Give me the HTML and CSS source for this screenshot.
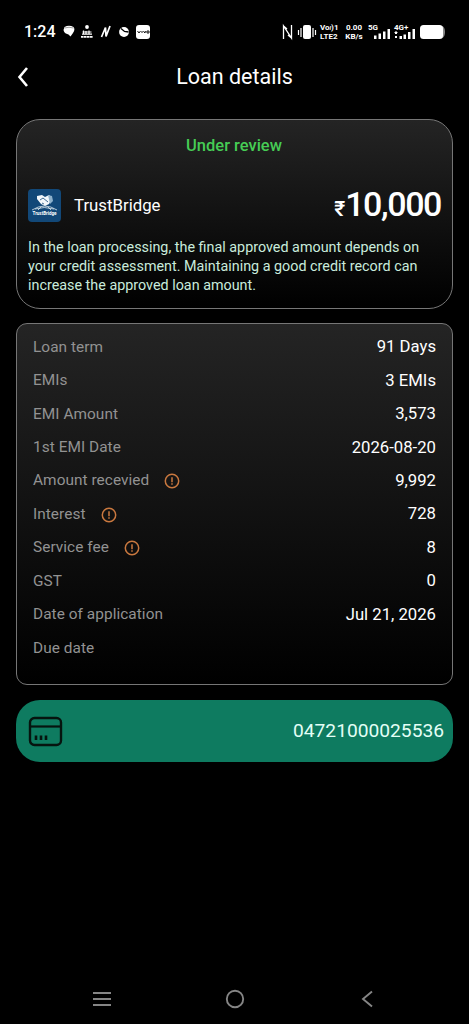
FILE: index.html
```html
<!DOCTYPE html>
<html lang="en">
<head>
<meta charset="utf-8">
<title>Loan details</title>
<link rel="stylesheet" href="styles.css">
</head>
<body>
<div class="screen">
  <div class="status">
    <span class="clock">1:24</span>
    <svg class="notices" width="96" height="18" viewBox="0 0 96 18" fill="#fff">
      <path d="M2.500 4Q7 1.500 11.500 4Q13.500 6.500 11 10L8.500 13.500L6.500 11.500Q2 10.500 1.500 7Z"/><path d="M2.500 5Q7 3.500 11.500 5" stroke="#777" fill="none" stroke-width=".7"/>
      <circle cx="25" cy="4" r="1.900"/><path d="M20.500 9h9M21.500 7.500v4M24 8v3.500M27 7.500v4M20 11.200h10" stroke="#fff" stroke-width="1.200"/><path d="M19 13.800h12" stroke="#fff" stroke-width="1.800" stroke-dasharray="2.500 .4"/>
      <path d="M39.500 14L43.500 4.500L44 13.500L48 3" fill="none" stroke="#fff" stroke-width="1.700"/>
      <circle cx="62" cy="9" r="4.900"/><path d="M59 5.500L62.500 8.500L66.500 9" fill="none" stroke="#000" stroke-width="1.300"/>
      <rect x="74" y="2" width="14" height="14" rx="3"/><path d="M75.500 8l1.500 2l1.500-2M80 8v2M81.500 8l1.300 2l1.200-2M85 8h2v2h-2z" fill="none" stroke="#000" stroke-width=".9"/>
    </svg>
    <svg class="radio" width="37" height="18" viewBox="0 0 37 18" fill="none" stroke="#fff">
      <path d="M1.500 16V3L9.500 15V2M1.500 3L5 6M9.500 15L6 12" stroke-width="1.300"/>
      <rect x="21" y="2" width="8" height="14" rx="2" fill="#fff" stroke="none"/><path d="M16.500 7v5M19 5v9M31 5v9M33.500 7v5" stroke-width="1.200"/>
    </svg>
    <span class="mini volte">Vo<i>l</i>)1<br>LTE2</span>
    <span class="mini speed">0.00<br>KB/s</span>
    <span class="mini net">5G<svg width="17" height="10" viewBox="0 0 17 10" fill="#fff"><path d="M0 6.500h2.500V10H0zM4.500 4.500h2.500V10h-2.500zM9 2.500h2.500V10H9zM13.500 0h2.500v10h-2.500z"/></svg></span>
    <span class="mini net wide">4G+<svg width="22" height="10" viewBox="0 0 22 10" fill="#fff"><path d="M0 4l2-2l2 2H3v1H1V4zM1 7h2v2H1zM5.500 7h2.500v3H5.500zM9.500 5.500H12V10H9.500zM14 3h2.500v7H14zM18.500 0H21v10h-2.500z"/></svg></span>
    <svg class="battery" width="26" height="16" viewBox="0 0 26 16"><path d="M22 2Q25 3 25 8T22 14Z" fill="#888"/><rect x="0" y="1" width="23" height="14" rx="3.500" fill="#fff"/></svg>
  </div>

  <header class="topbar">
    <svg class="back" width="12" height="22" viewBox="0 0 12 22"><path d="M10 2L2.500 11L10 20" fill="none" stroke="#fff" stroke-width="2.600"/></svg>
    <h1>Loan details</h1>
  </header>

  <main>
    <section class="card summary">
      <div class="state">Under review</div>
      <div class="lender">
        <svg width="33" height="33" viewBox="0 0 33 33">
          <rect width="33" height="33" rx="4" fill="#124878"/>
          <path d="M9 7l5-1l3 2l4-2l3 3l-3 6l-4 2l-4-2l-4-5z" fill="#f2f7fa"/><path d="M20 6l4 1l1 5l-3 3" fill="#8db1cb"/><path d="M12 11l3-2l5 4M14 14l2 1" stroke="#124878" stroke-width=".8" fill="none"/>
          <path d="M4 21Q16.500 13 29 21M7 20Q16 17 26 20M13 18L10 21M20 18L23 21" fill="none" stroke="#dce8ef" stroke-width=".8"/>
          <text class="logo-name" x="16.500" y="26" text-anchor="middle">TrustBridge</text>
        </svg>
        <span class="name">TrustBridge</span>
        <span class="amount"><small>₹</small>10,000</span>
      </div>
      <p>In the loan processing, the final approved amount depends on<br>your credit assessment. Maintaining a good credit record can<br>increase the approved loan amount.</p>
    </section>

    <section class="card details">
      <div class="row"><span>Loan term</span><b>91 Days</b></div>
      <div class="row"><span>EMIs</span><b>3 EMIs</b></div>
      <div class="row"><span>EMI Amount</span><b>3,573</b></div>
      <div class="row"><span>1st EMI Date</span><b>2026-08-20</b></div>
      <div class="row"><span>Amount recevied</span><svg class="info" viewBox="0 0 16 16"><circle cx="8" cy="8" r="6.700"/><path d="M8 4.200v5M8 10.300v1.500"/></svg><b>9,992</b></div>
      <div class="row"><span>Interest</span><svg class="info" viewBox="0 0 16 16"><circle cx="8" cy="8" r="6.700"/><path d="M8 4.200v5M8 10.300v1.500"/></svg><b>728</b></div>
      <div class="row"><span>Service fee</span><svg class="info" viewBox="0 0 16 16"><circle cx="8" cy="8" r="6.700"/><path d="M8 4.200v5M8 10.300v1.500"/></svg><b>8</b></div>
      <div class="row"><span>GST</span><b>0</b></div>
      <div class="row"><span>Date of application</span><b>Jul 21, 2026</b></div>
      <div class="row"><span>Due date</span></div>
    </section>

    <section class="account">
      <svg width="35" height="31" viewBox="0 0 35 31"><rect x="2" y="2" width="31" height="27" rx="4.500" fill="none" stroke="#06140f" stroke-width="2.400"/><path d="M2 10.500h31" stroke="#06140f" stroke-width="2.200"/><path d="M8 19.500v4.500M13 19.500v4.500M18 19.500v4.500" stroke="#06140f" stroke-width="2.600"/></svg>
      <span>04721000025536</span>
    </section>
  </main>

  <nav>
    <svg width="20" height="20" viewBox="0 0 20 20"><path d="M1 4h18M1 10h18M1 16h18"/></svg>
    <svg width="20" height="20" viewBox="0 0 20 20"><circle cx="10" cy="10" r="8.200"/></svg>
    <svg width="20" height="20" viewBox="0 0 20 20"><path d="M15 2.500L6 10L15 17.500"/></svg>
  </nav>
</div>
</body>
</html>
```
FILE: styles.css
```css
* { box-sizing: border-box; }
body { margin: 0; background: #000; color: #fff; font-family: Roboto, "Noto Sans", sans-serif; }
svg { display: block; flex: none; }
.screen { width: 469px; height: 1024px; display: flex; flex-direction: column; overflow: hidden; }

.status { height: 50px; padding: 23px 0 0 24px; display: flex; align-items: flex-start; }
.clock { width: 38px; font-size: 16px; font-weight: 500; line-height: 18px; letter-spacing: 0; white-space: nowrap; }
.notices { margin-right: 124px; }
.radio { margin-right: 1px; }
.mini { font-size: 8px; font-weight: 700; line-height: 9px; white-space: nowrap; }
.mini i { font-size: 6px; }
.volte { width: 23px; }
.speed { width: 22px; text-align: center; margin-right: 3px; }
.net { width: 26px; }
.net svg { margin: -3px 0 0 6px; }
.wide { width: 26px; }
.wide svg { margin-left: 0; }
.battery { margin-top: 1px; }

.topbar { height: 69px; padding: 14px 0 0 17px; display: flex; align-items: flex-start; }
.back { margin-top: 2px; }
h1 { flex: 1; margin: 0; padding-right: 29px; font-size: 21.500px; font-weight: 400; line-height: 25px; text-align: center; }

main { flex: 1; padding: 0 16px; display: flex; flex-direction: column; }
.card { border: 1px solid #767676; background: linear-gradient(#242424, #000); }
.summary { height: 190px; margin-bottom: 14px; border-radius: 24px; padding: 0 12px 0 11px; }
.state { margin-top: 16px; color: #46cc55; font-size: 16.500px; font-weight: 500; line-height: 20px; text-align: center; }
.lender { height: 40px; margin-top: 29px; display: flex; align-items: center; }
.logo-name { fill: #fff; font: 700 4.500px Roboto, sans-serif; }
.name { margin-left: 13px; font-size: 16.800px; }
.amount { margin: 2px -1px 0 auto; font-size: 34px; font-weight: 500; line-height: 40px; letter-spacing: -1.400px; }
.amount small { font-size: 21px; letter-spacing: 0; }
p { margin: 13px 0 0; color: #c9ebdc; font-size: 14.350px; line-height: 19px; white-space: nowrap; }

.details { height: 362px; margin-bottom: 15px; border-radius: 11px; padding: 6px 16px 0; }
.row { height: 33.450px; display: flex; align-items: center; }
.row span { color: #929292; font-size: 15.400px; letter-spacing: 0.050px; }
.row b { margin-left: auto; font-size: 16.700px; font-weight: 400; }
.info { width: 16px; height: 16px; margin: 2px 0 0 15px; fill: none; stroke: #c9783f; stroke-width: 1.500; }

.account { height: 62px; border-radius: 24px; padding: 0 9px 0 12px; display: flex; align-items: center; justify-content: space-between; background: #0e7b60; }
.account span { margin-top: -1px; font-size: 19.200px; color: #e3fff6; }

nav { height: 50px; padding: 0 92px; display: flex; justify-content: space-between; align-items: center; }
nav svg { fill: none; stroke: #858585; stroke-width: 1.900; }
```
